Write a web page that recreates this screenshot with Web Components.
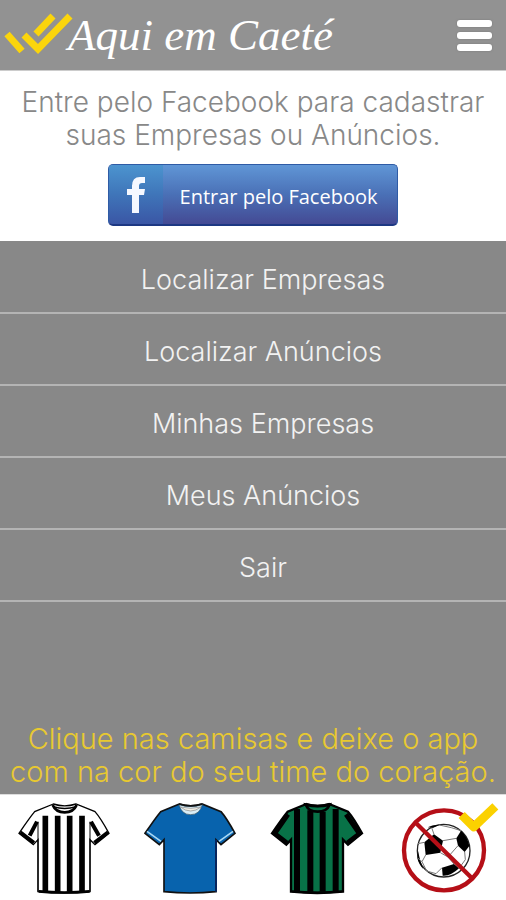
<!DOCTYPE html>
<html lang="pt-BR">
<head>
<meta charset="utf-8">
<meta name="viewport" content="width=device-width, initial-scale=1">
<title>Aqui em Caeté</title>
<style>
    body {
        margin: 0;
        font-family: "Century Gothic", Inter, sans-serif;
        font-weight: 300;
        background: #fff;
    }
</style>
</head>
<body>
<caete-app>
    <app-header slot="header">Aqui em Caeté</app-header>
    <login-panel slot="login">Entre pelo Facebook para cadastrar suas Empresas ou Anúncios.</login-panel>
    <menu-item>Localizar Empresas</menu-item>
    <menu-item>Localizar Anúncios</menu-item>
    <menu-item>Minhas Empresas</menu-item>
    <menu-item>Meus Anúncios</menu-item>
    <menu-item>Sair</menu-item>
    <span slot="hint">Clique nas camisas e deixe o app com na cor do seu time do coração.</span>
    <team-option slot="teams" team="alvinegro" label="Camisa preta e branca"></team-option>
    <team-option slot="teams" team="azul" label="Camisa azul"></team-option>
    <team-option slot="teams" team="verde" label="Camisa verde e preta"></team-option>
    <team-option slot="teams" team="nenhum" label="Sem time" selected></team-option>
</caete-app>

<script>
function makeTemplate(html) {
    const template = document.createElement("template");
    template.innerHTML = html;
    return template;
}

const appTemplate = makeTemplate(`
<style>
    :host {
        display: flex;
        flex-direction: column;
        min-height: 100vh;
    }

    main {
        flex: 1;
        display: flex;
        flex-direction: column;
        background: #888;
    }

    nav {
        padding-top: 1px;
    }

    .hint {
        margin: auto 0 0;
        padding: 0 8px 6px;
        font-size: 29px;
        line-height: 33px;
        text-align: center;
        text-wrap: balance;
        color: #e8c930;
    }

    footer {
        display: grid;
        grid-template-columns: repeat(4, 1fr);
        border-top: 1px solid #ddd;
        background: #fff;
    }
</style>

<slot name="header"></slot>
<slot name="login"></slot>
<main>
    <nav><slot></slot></nav>
    <p class="hint"><slot name="hint"></slot></p>
</main>
<footer><slot name="teams"></slot></footer>`);

class CaeteApp extends HTMLElement {
    constructor() {
        super();
        this.attachShadow({ mode: "open" });
        this.shadowRoot.appendChild(appTemplate.content.cloneNode(true));
    }
}

const headerTemplate = makeTemplate(`
<style>
    :host {
        display: block;
    }

    header {
        display: flex;
        align-items: center;
        height: 70px;
        padding: 0 12px 0 4px;
        background: #929292;
    }

    .logo {
        margin-right: -6px;
    }

    h1 {
        flex: 1;
        margin: 0;
        font-family: "Brush Script MT", "Liberation Serif", serif;
        font-style: italic;
        font-weight: 400;
        font-size: 45px;
        line-height: 70px;
        color: #fff;
    }

    button {
        display: flex;
        flex-direction: column;
        gap: 5px;
        padding: 0 2px;
        border: 0;
        background: none;
        cursor: pointer;
    }

    button i {
        width: 35px;
        height: 7px;
        border-radius: 3px;
        background: #fff;
        box-shadow: 0 0 2px #777;
    }
</style>

<header>
    <svg class="logo" width="70" height="44" viewBox="0 0 70 44" fill="none" stroke="#fbd50c" stroke-width="7" aria-hidden="true">
        <path d="M3 21 L18 38"/>
        <path d="M20 22 L34 36 L66 3"/>
        <path d="M49 3 L32 21"/>
    </svg>
    <h1><slot></slot></h1>
    <button type="button" aria-label="Menu"><i></i><i></i><i></i></button>
</header>`);

class AppHeader extends HTMLElement {
    constructor() {
        super();
        this.attachShadow({ mode: "open" });
        this.shadowRoot.appendChild(headerTemplate.content.cloneNode(true));
    }
}

const loginTemplate = makeTemplate(`
<style>
    :host {
        display: flex;
        flex-direction: column;
        align-items: center;
        gap: 12px;
        padding: 15px 8px;
        border-top: 1px solid #ccc;
    }

    p {
        margin: 0;
        font-size: 28px;
        line-height: 33px;
        text-align: center;
        color: #888;
    }

    button {
        display: flex;
        align-items: stretch;
        height: 62px;
        padding: 0;
        overflow: hidden;
        border: 1px solid #2f5ba5;
        border-bottom: 2px solid #1d3883;
        border-radius: 5px;
        background: linear-gradient(#6096d6, #4a70b6 50%, #444a94);
        font-family: "Open Sans", sans-serif;
        font-size: 20px;
        color: #fff;
        cursor: pointer;
    }

    .icon {
        display: flex;
        align-items: center;
        justify-content: center;
        width: 54px;
        background: linear-gradient(#4c94cf, #3f75b9 50%, #3a56a5);
    }

    .text {
        align-self: center;
        padding: 4px 20px 0 17px;
    }
</style>

<p><slot></slot></p>
<button type="button">
    <span class="icon">
        <svg width="18" height="36" viewBox="0 0 18 36" aria-hidden="true">
            <path fill="#f5f8ff" d="M5 36 V18 H0 V12 H5 V9 Q5 0 13 0 H18 V6 H15 Q12 6 12 9 V12 H18 L17 18 H12 V36 Z"/>
        </svg>
    </span>
    <span class="text">Entrar pelo Facebook</span>
</button>`);

class LoginPanel extends HTMLElement {
    constructor() {
        super();
        this.attachShadow({ mode: "open" });
        this.shadowRoot.appendChild(loginTemplate.content.cloneNode(true));
    }
}

const itemTemplate = makeTemplate(`
<style>
    :host {
        display: block;
    }

    a {
        display: block;
        padding: 6px 0 0 20px;
        border-bottom: 2px solid #b4b4b4;
        font-size: 27px;
        line-height: 64px;
        text-align: center;
        text-decoration: none;
        color: #f2f2f2;
    }
</style>

<a href="#"><slot></slot></a>`);

class MenuItem extends HTMLElement {
    constructor() {
        super();
        this.attachShadow({ mode: "open" });
        this.shadowRoot.appendChild(itemTemplate.content.cloneNode(true));
    }
}

const shirtPath = "M157 27 L101 50 Q86 68 54 115 L97 149 L111 134 V290 Q190 298 267 290 V134 L282 149 L324 115 Q298 68 282 50 L225 27 Q191 38 157 27 Z";

const drawings = {
    alvinegro: `
        <path d="${shirtPath}" fill="#fff" stroke="#000" stroke-width="4"/>
        <path d="M133 62 V290 M170 62 V290 M206 62 V290 M243 62 V290" stroke="#000" stroke-width="17"/>
        <path d="M108 80 L86 122 M270 80 L294 122" stroke="#000" stroke-width="12"/>
        <path d="M58 112 L99 143 M321 112 L280 143" stroke="#000" stroke-width="11"/>
        <path d="M113 289 Q190 296 266 289" stroke="#000" stroke-width="8"/>
        <path d="M111 80 V290 M267 80 V290" stroke="#000" stroke-width="3"/>
        <path d="M155 30 Q164 52 191 52 T227 30" stroke="#000" stroke-width="8"/>
        <path d="M157 35 Q191 46 225 35" stroke="#000" stroke-width="4"/>`,
    azul: `
        <path d="${shirtPath}" fill="#0863ad" stroke="#111" stroke-width="5"/>
        <path d="M60 109 L102 139 M318 109 L276 139" stroke="#a8d8f4" stroke-width="5"/>
        <path d="M267 134 V290" stroke="#08255c" stroke-width="6"/>
        <path d="M156 29 Q164 59 191 59 T226 29 Q191 40 156 29 Z" fill="#d9edf6" stroke="#3a5360" stroke-width="2"/>
        <path d="M160 36 Q191 60 222 36 Q191 44 160 36 Z" fill="#f2eee4" stroke="#888" stroke-width="2"/>
        <path d="M157 27 Q191 38 225 27" stroke="#111" stroke-width="5"/>`,
    verde: `
        <path d="${shirtPath}" fill="#087247" stroke="#000" stroke-width="7"/>
        <path d="M129 42 V290 M169 46 V290 M206 50 V290 M245 42 V290" stroke="#000" stroke-width="18"/>
        <path d="M102 58 L62 116 M276 58 L316 116" stroke="#000" stroke-width="14"/>
        <path d="M58 112 L99 143 M321 112 L280 143" stroke="#000" stroke-width="13"/>
        <path d="M113 289 Q190 296 266 289" stroke="#000" stroke-width="6"/>
        <path d="M155 29 Q164 50 191 50 T227 29 Q191 38 155 29 Z" fill="#087247" stroke="#000" stroke-width="8"/>
        <path d="M157 28 Q191 40 225 28" stroke="#000" stroke-width="5"/>`,
    nenhum: `
        <circle cx="191" cy="167" r="79" fill="#fff" stroke="#222" stroke-width="4"/>
        <path d="M133 142 L162 118 L189 137 L181 173 L137 180 Z" fill="#000"/>
        <path d="M229 130 L243 107 Q263 126 268 153 L254 171 L234 152 Z" fill="#000"/>
        <path d="M186 218 L222 207 L237 220 Q212 244 188 242 Z" fill="#000"/>
        <path d="M120 194 L114 168 L112 190 Q116 208 130 222 Z M143 97 Q160 88 178 90 L160 98 Z" fill="#000"/>
        <path d="M162 118 L155 98 M189 137 L229 130 M181 173 L204 186 L222 207 M204 186 L234 152 M137 180 L126 200 L140 228 L168 236 L186 218 M133 142 L114 146 M126 200 L114 190 M254 171 L256 194 L237 220 M178 90 L214 98 L243 107" stroke="#777" stroke-width="3"/>
        <circle cx="192" cy="166" r="120" stroke="#b50f17" stroke-width="13"/>
        <path d="M107 83 L276 250" stroke="#b50f17" stroke-width="13"/>`
};

const optionTemplate = makeTemplate(`
<style>
    :host {
        display: block;
    }

    button {
        display: block;
        width: 100%;
        padding: 0;
        border: 0;
        background: none;
        cursor: pointer;
    }

    svg {
        display: block;
        margin: 0 auto;
    }

    .check {
        display: none;
    }

    :host([selected]) .check {
        display: block;
    }
</style>

<button type="button">
    <svg width="125" height="105" viewBox="0 0 375 315" fill="none" aria-hidden="true">
        <g class="drawing"></g>
        <path class="check" d="M245 60 L281 96 L346 34" stroke="#fbd100" stroke-width="26" stroke-linejoin="round"/>
    </svg>
</button>`);

class TeamOption extends HTMLElement {
    constructor() {
        super();
        this.attachShadow({ mode: "open" });
        this.shadowRoot.appendChild(optionTemplate.content.cloneNode(true));
        this.$button = this.shadowRoot.querySelector("button");
        this.$drawing = this.shadowRoot.querySelector(".drawing");
    }

    static get observedAttributes() {
        return ["team", "label", "selected"];
    }

    connectedCallback() {
        this.$button.addEventListener("click", () => {
            this.parentNode.querySelectorAll("team-option").forEach(option => {
                option.toggleAttribute("selected", option === this);
            });
        });
    }

    attributeChangedCallback(name, oldValue, newValue) {
        switch (name) {
            case "team":
                this.$drawing.innerHTML = drawings[newValue] || "";
                break;
            case "label":
                this.$button.setAttribute("aria-label", newValue);
                break;
            case "selected":
                this.$button.setAttribute("aria-pressed", newValue !== null);
                break;
            default:
                break;
        }
    }
}

customElements.define("caete-app", CaeteApp);
customElements.define("app-header", AppHeader);
customElements.define("login-panel", LoginPanel);
customElements.define("menu-item", MenuItem);
customElements.define("team-option", TeamOption);
</script>
</body>
</html>
